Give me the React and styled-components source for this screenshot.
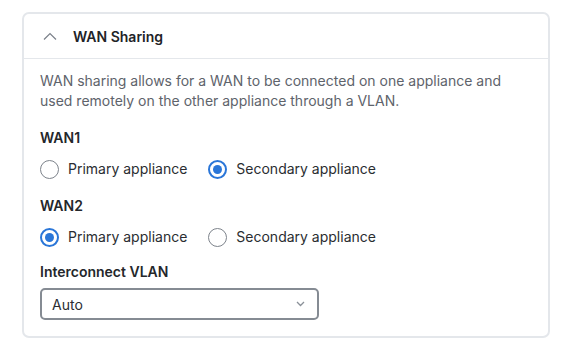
import React from 'react';
import styled, { createGlobalStyle } from 'styled-components';

const GlobalStyle = createGlobalStyle`
  body {
    margin: 0;
    background: #ffffff;
    font-family: Inter, "Liberation Sans", sans-serif;
  }
`;

const Page = styled.div`
  padding: 12px 0 0 22px;
`;

const Card = styled.section`
  box-sizing: border-box;
  width: 528px;
  border: 2px solid #e4e7eb;
  border-radius: 7px;
  background: #fff;
`;

const Header = styled.div`
  display: flex;
  align-items: center;
  gap: 16px;
  height: 44px;
  padding-left: 19px;
  border-bottom: 1px solid #e4e7eb;
`;

const Title = styled.h2`
  margin: 0;
  font-size: 14px;
  font-weight: 600;
  color: #212327;
`;

const Body = styled.div`
  padding: 12px 16px 16px 16px;
  display: flex;
  flex-direction: column;
`;

const Description = styled.p`
  margin: 0;
  font-size: 14px;
  line-height: 20px;
  color: #5e636b;
`;

const Label = styled.div`
  font-size: 14px;
  line-height: 20px;
  font-weight: 600;
  color: #24272b;
  margin-top: ${(p) => p.$top}px;
`;

const RadioRow = styled.div`
  display: flex;
  gap: 21px;
  margin-top: 11px;
`;

const Option = styled.label`
  display: flex;
  align-items: center;
  gap: 9px;
  font-size: 14px;
  line-height: 20px;
  color: #2a2d31;
`;

const Circle = styled.span`
  box-sizing: border-box;
  width: 19px;
  height: 19px;
  border-radius: 50%;
  border: ${(p) => (p.$checked ? '2px solid #2a76d8' : '1.5px solid #7d838b')};
  display: flex;
  align-items: center;
  justify-content: center;
  &::after {
    content: '';
    display: ${(p) => (p.$checked ? 'block' : 'none')};
    width: 9px;
    height: 9px;
    border-radius: 50%;
    background: #2a76d8;
  }
`;

const Select = styled.div`
  box-sizing: border-box;
  margin-top: 6px;
  width: 279px;
  height: 32px;
  border: 2px solid #858b93;
  border-radius: 5px;
  display: flex;
  align-items: center;
  justify-content: space-between;
  padding: 0 12px 0 10px;
  font-size: 14px;
  color: #2a2d31;
`;

function Radio({ label, checked }) {
  return (
    <Option>
      <Circle $checked={checked} />
      {label}
    </Option>
  );
}

export default function App() {
  return (
    <Page>
      <GlobalStyle />
      <Card>
        <Header>
          <svg width="14" height="8" viewBox="0 0 14 8" fill="none">
            <path d="M1 7.5 L7 1.5 L13 7.5" stroke="#7a8089" strokeWidth="1.2" />
          </svg>
          <Title>WAN Sharing</Title>
        </Header>
        <Body>
          <Description>
            WAN sharing allows for a WAN to be connected on one appliance and
            used remotely on the other appliance through a VLAN.
          </Description>
          <Label $top={17}>WAN1</Label>
          <RadioRow>
            <Radio label="Primary appliance" />
            <Radio label="Secondary appliance" checked />
          </RadioRow>
          <Label $top={17}>WAN2</Label>
          <RadioRow>
            <Radio label="Primary appliance" checked />
            <Radio label="Secondary appliance" />
          </RadioRow>
          <Label $top={15}>Interconnect VLAN</Label>
          <Select>
            Auto
            <svg width="9" height="6" viewBox="0 0 9 6" fill="none">
              <path d="M1 1 L4.5 4.5 L8 1" stroke="#8a9098" strokeWidth="1.3" />
            </svg>
          </Select>
        </Body>
      </Card>
    </Page>
  );
}
